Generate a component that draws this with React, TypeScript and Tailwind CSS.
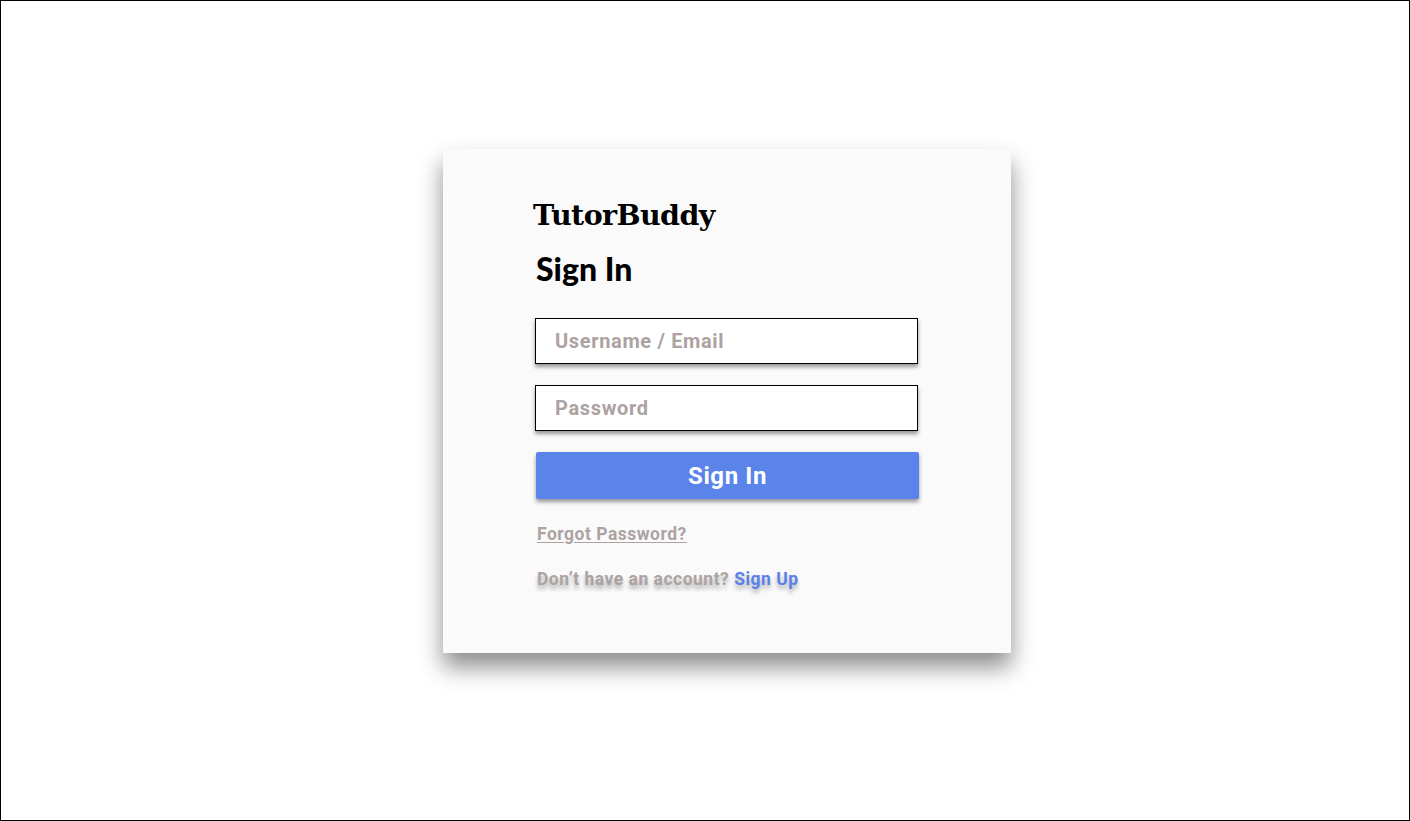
export default function App() {
  return (
    <div className="flex h-[821px] w-[1410px] items-start justify-center border border-black bg-white pl-[44px] pt-[148px]">
      <div className="flex h-[504px] w-[568px] flex-col bg-[#fafafa] pl-[90px] pt-[48px] shadow-[0_14px_22px_rgba(0,0,0,0.45)]">
        <h1 className="font-['DejaVu_Serif'] text-[28.5px] font-bold leading-[36px] tracking-[-0.6px] text-black">
          TutorBuddy
        </h1>
        <h2 className="mt-[18px] pl-[3px] font-['Lato'] text-[32px] font-black leading-[36px] text-black">
          Sign In
        </h2>
        <form className="ml-[2px] mt-[31px] flex w-[383px] flex-col font-['Roboto']">
          <input
            type="text"
            placeholder="Username / Email"
            className="h-[46px] w-full border border-black bg-white px-[19px] text-[20px] font-bold tracking-[0.65px] text-[#333] shadow-[0_3px_4px_rgba(0,0,0,0.4)] outline-none placeholder:text-[#ada2a2]"
          />
          <input
            type="password"
            placeholder="Password"
            className="mt-[21px] h-[46px] w-full border border-black bg-white px-[19px] text-[20px] font-bold tracking-[0.65px] text-[#333] shadow-[0_3px_4px_rgba(0,0,0,0.4)] outline-none placeholder:text-[#ada2a2]"
          />
          <button
            type="button"
            className="ml-[1px] mt-[21px] h-[47px] w-[383px] rounded-[2px] bg-[#5b84ea] text-[24px] font-bold tracking-[0.6px] text-white shadow-[0_3px_4px_rgba(0,0,0,0.4)]"
          >
            Sign In
          </button>
        </form>
        <div className="mt-[22px] pl-[4px] font-['Roboto'] text-[17.5px] font-bold tracking-[0.5px]">
          <a href="#" className="text-[#ada2a2] underline underline-offset-2">
            Forgot Password?
          </a>
          <p className="mt-[19px] text-[#ada2a2] [text-shadow:0_4px_4px_rgba(0,0,0,0.3)]">
            Don’t have an account? <span className="text-[#5b7fe8]">Sign Up</span>
          </p>
        </div>
      </div>
    </div>
  );
}
